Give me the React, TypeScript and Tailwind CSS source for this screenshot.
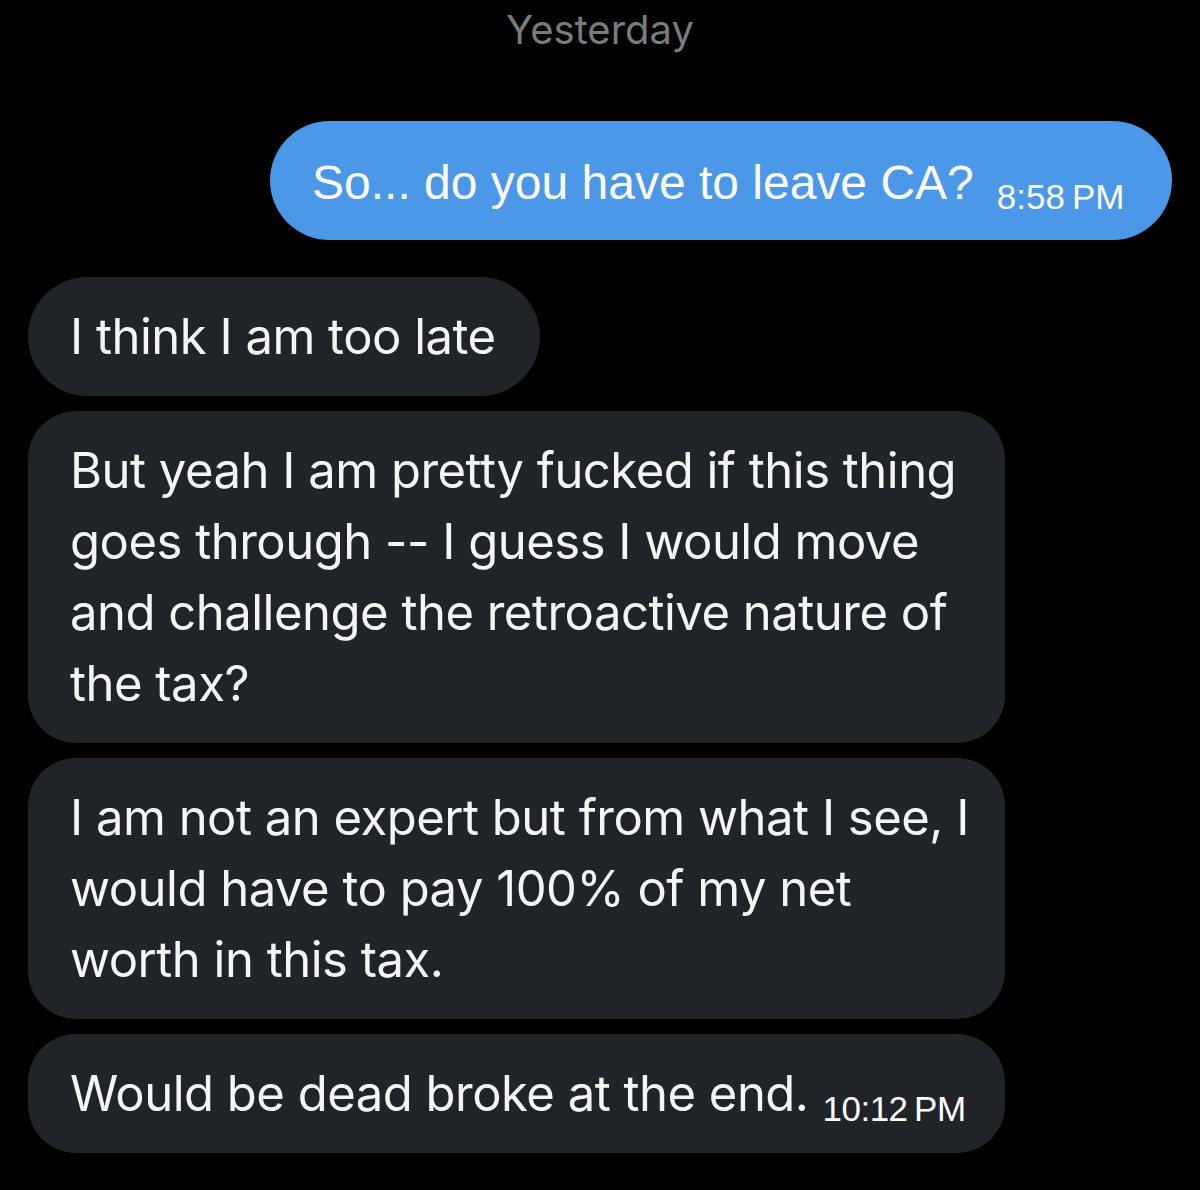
import React from 'react';

type Msg = {
  id: number;
  lines: string[];
  time?: string;
};

const incoming: Msg[] = [
  { id: 1, lines: ['I think I am too late'] },
  {
    id: 2,
    lines: [
      'But yeah I am pretty fucked if this thing',
      'goes through -- I guess I would move',
      'and challenge the retroactive nature of',
      'the tax?',
    ],
  },
  {
    id: 3,
    lines: [
      'I am not an expert but from what I see, I',
      'would have to pay 100% of my net',
      'worth in this tax.',
    ],
  },
  { id: 4, lines: ['Would be dead broke at the end.'], time: '10:12\u2009PM' },
];

function Time({ value, gap }: { value: string; gap: string }) {
  return (
    <span
      className={`${gap} inline-block leading-none whitespace-nowrap align-[-10px] text-[35px] font-['Liberation_Sans',sans-serif] text-white`}
    >
      {value}
    </span>
  );
}

export default function App() {
  return (
    <div className="w-[1200px] h-[1190px] bg-black overflow-hidden">
      {/* Day separator */}
      <div className="pt-[7px] text-center text-[40px] leading-[46px] text-[#7b7b7b] font-['Inter',sans-serif]">
        Yesterday
      </div>

      {/* Outgoing */}
      <div className="mt-[68px] flex justify-end pr-[28px]">
        <div className="w-[902px] h-[119px] rounded-full bg-[#4b98e8] pl-[42px] pr-[46px] pt-[6px] flex items-center">
          <p className="text-[48px] leading-[60px] text-white font-['Liberation_Sans',sans-serif]">
            So... do you have to leave CA?
            <Time value={'8:58\u2009PM'} gap="ml-[23px]" />
          </p>
        </div>
      </div>

      {/* Incoming */}
      <div className="mt-[37px] flex flex-col items-start gap-[15px] pl-[28px]">
        {incoming.map((m) => (
          <div
            key={m.id}
            className={
              m.id === 1
                ? 'rounded-[60px] bg-[#202327] pl-[42px] pr-[44px] py-[24px]'
                : 'w-[977px] rounded-[48px] bg-[#202327] pl-[42px] pr-[40px] py-[24px]'
            }
          >
            <p className="text-[49px] leading-[71px] text-[#f4f5f6] font-['Inter',sans-serif] tracking-[-0.5px]">
              {m.lines.map((l, i) => (
                <span key={i} className="block whitespace-nowrap">
                  {l}
                  {m.time && i === m.lines.length - 1 && (
                    <Time value={m.time} gap="ml-[14px]" />
                  )}
                </span>
              ))}
            </p>
          </div>
        ))}
      </div>
    </div>
  );
}
